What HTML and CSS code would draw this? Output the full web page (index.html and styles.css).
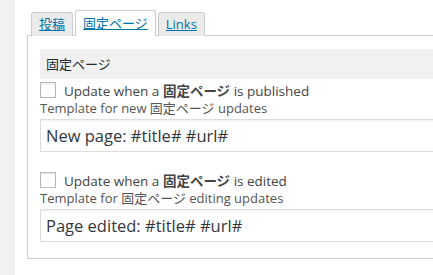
FILE: index.html
```html
<!DOCTYPE html>
<html lang="ja">
<head>
    <meta charset="UTF-8">
    <meta name="viewport" content="width=device-width, initial-scale=1.0">
    <link rel="stylesheet" href="styles.css">
    <title>Tweet templates</title>
</head>
<body>
    <div class="sidebar"></div>

    <div class="main">
        <!-- Post type tabs -->
        <div class="tabs">
            <a href="#" class="tab">投稿</a>
            <a href="#" class="tab active">固定ページ</a>
            <a href="#" class="tab">Links</a>
        </div>

        <div class="panel">
            <div class="section-title">固定ページ</div>

            <label class="check-row">
                <input type="checkbox" class="check">
                <span>Update when a <strong>固定ページ</strong> is published</span>
            </label>
            <p class="hint">Template for new 固定ページ updates</p>
            <input type="text" class="template" value="New page: #title# #url#">

            <label class="check-row">
                <input type="checkbox" class="check">
                <span>Update when a <strong>固定ページ</strong> is edited</span>
            </label>
            <p class="hint">Template for 固定ページ editing updates</p>
            <input type="text" class="template last" value="Page edited: #title# #url#">
        </div>
    </div>
</body>
</html>
```

FILE: styles.css
```css
body {
    margin: 0;
    display: flex;
    min-height: 100vh;
    overflow: hidden;
    background-color: #ffffff;
    font-family: "Open Sans", "Noto Sans CJK JP", sans-serif;
    color: #444444;
}

.sidebar {
    width: 15px;
    flex-shrink: 0;
    background-color: #f1f1f1;
}

.main {
    flex: 1;
    padding: 10px 0 0 12px;
}

.tabs {
    display: flex;
    align-items: flex-end;
    gap: 2px;
    margin-left: 4px;
    margin-bottom: -1px;
}

.tab {
    display: block;
    height: 23px;
    line-height: 23px;
    padding: 0 7px;
    font-size: 13px;
    color: #0073aa;
    background-color: #ebebeb;
    border: 1px solid #cccccc;
    border-bottom: none;
    border-radius: 3px 3px 0 0;
}

.tab.active {
    background-color: #ffffff;
    height: 25px;
    line-height: 24px;
}

.panel {
    width: 600px;
    border: 1px solid #cccccc;
    padding: 13px 0 16px 12px;
}

.section-title {
    height: 30px;
    line-height: 30px;
    padding-left: 6px;
    font-size: 13px;
    color: #23282d;
    background-color: #f1f1f1;
}

.check-row {
    display: flex;
    align-items: center;
    gap: 8px;
    height: 16px;
    margin-top: 3px;
    font-size: 13.5px;
    color: #444444;
}

.check {
    appearance: none;
    width: 16px;
    height: 16px;
    margin: 0;
    border: 1px solid #b4b9be;
    background-color: #ffffff;
    box-shadow: inset 0 1px 2px rgba(0, 0, 0, 0.1);
}

.hint {
    margin: 0;
    height: 21px;
    line-height: 21px;
    font-size: 13px;
    color: #555555;
}

.template {
    display: block;
    box-sizing: border-box;
    width: 100%;
    height: 33px;
    margin: 0 0 20px 0;
    padding: 0 5px;
    font-family: "Open Sans", "Noto Sans CJK JP", sans-serif;
    font-size: 16.5px;
    color: #32373c;
    border: 1px solid #dddddd;
    border-right: none;
    box-shadow: inset 0 1px 2px rgba(0, 0, 0, 0.07);
    outline: none;
}

.template.last {
    margin-bottom: 0;
}

.check-row + .hint + .template + .check-row {
    margin-top: 0;
}
```
